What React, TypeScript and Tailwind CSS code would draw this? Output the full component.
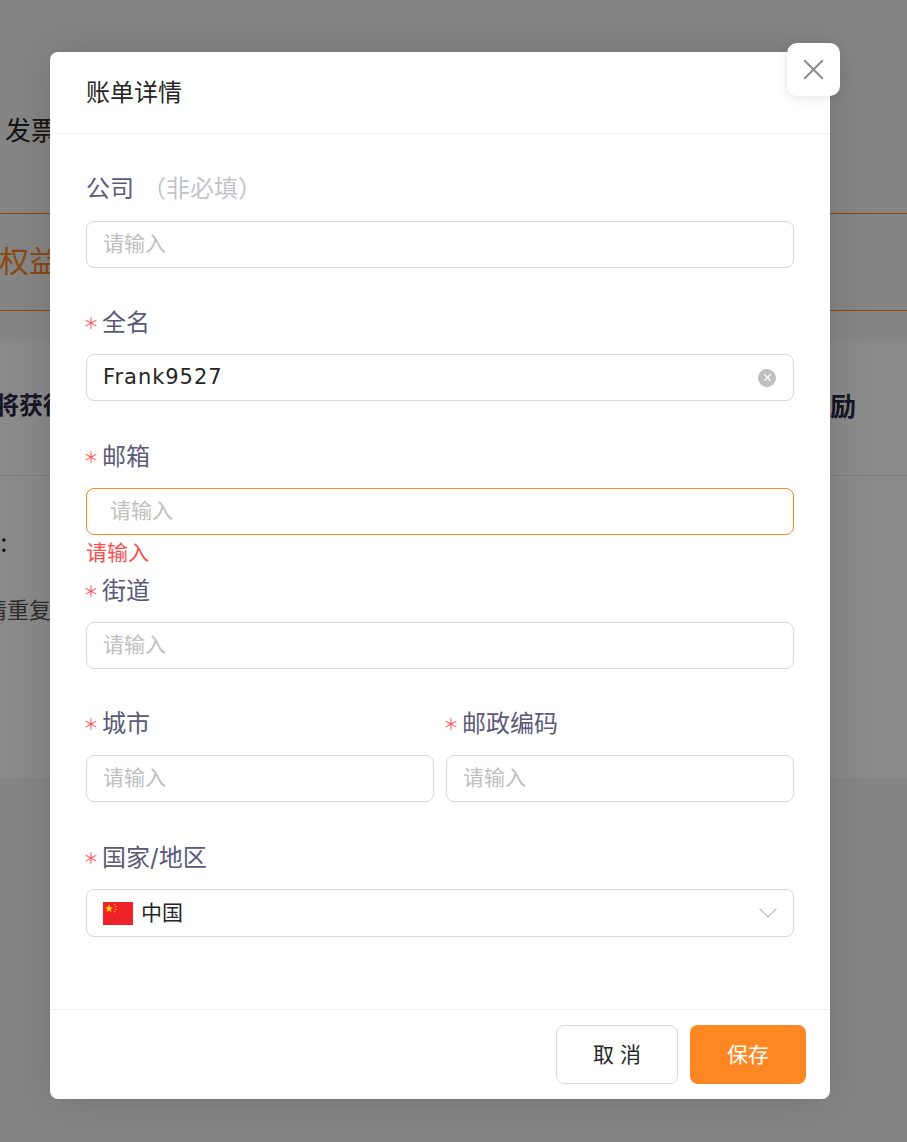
import React from 'react';
import { X, ChevronDown } from 'lucide-react';

const font = "font-['Inter','Noto_Sans_CJK_SC',sans-serif]";

function Label({ text, required, hint }: { text: string; required?: boolean; hint?: string }) {
  return (
    <div className={`flex items-center h-[34px] text-[24px] leading-[34px] text-[#5c5a78] ${required ? 'pt-[1px]' : ''}`}>
      {required && <span className="w-[19px] -ml-[3px] text-[16px] text-[#ff5a5f]">＊</span>}
      <span>{text}</span>
      {hint && <span className="ml-[8px] text-[#c3c3cf]">{hint}</span>}
    </div>
  );
}

function Input({ value, active }: { value?: string; active?: boolean }) {
  return (
    <div
      className={`flex items-center h-[47px] rounded-[8px] border bg-white ${
        active ? 'border-[#fd8823] pl-[23px]' : 'border-[#d9d9d9] pl-[16px]'
      } ${value ? "text-[21px] text-[#262626] tracking-[0.95px] font-['DejaVu_Sans']" : 'text-[21px] text-[#c0c0c0]'}`}
    >
      <span className={value ? 'pt-[1px]' : '-mt-[1px]'}>{value ?? '请输入'}</span>
      {value && (
        <span className="ml-auto mr-[17px] flex items-center justify-center w-[18px] h-[18px] rounded-full bg-[#bfbfbf]">
          <X className="w-[11px] h-[11px] text-white" strokeWidth={3} />
        </span>
      )}
    </div>
  );
}

function CnFlag() {
  return (
    <svg width="30" height="23" viewBox="0 0 30 23" className="shrink-0">
      <rect width="30" height="23" fill="#ee2228" />
      <polygon points="6,2.5 7,5.3 10,5.3 7.6,7.1 8.5,10 6,8.3 3.5,10 4.4,7.1 2,5.3 5,5.3" fill="#ffe000" />
      <circle cx="11.5" cy="2.5" r="0.7" fill="#ffe000" />
      <circle cx="13" cy="4.8" r="0.7" fill="#ffe000" />
      <circle cx="13" cy="7.5" r="0.7" fill="#ffe000" />
      <circle cx="11.5" cy="9.8" r="0.7" fill="#ffe000" />
    </svg>
  );
}

export default function App() {
  return (
    <div className={`relative w-[907px] h-[1142px] overflow-hidden bg-[#f6f6f7] text-[#262626] ${font}`}>
      {/* page behind the dialog */}
      <div className="h-[213px] pt-[113px] pl-[5px] text-[26px] leading-[36px]">发票</div>
      <div className="flex items-center h-[98px] pb-[2px] -ml-[1px] border-y border-[#fd8823] text-[30px] text-[#fd8823]">权益</div>
      <div className="h-[30px]" />
      <div className="bg-white h-[437px]">
        <div className="flex items-center justify-between h-[135px] pb-[4px] border-b border-[#e8e8e8] text-[24px] font-bold text-[#2a2a45] pr-[51px]">
          <span className="-ml-[5px]">将获得</span>
          <span className="text-[26px]">励</span>
        </div>
        <div className="pt-[49px] text-[26px] leading-[36px]">:</div>
        <div className="pt-[32px] -ml-[15px] text-[22px] leading-[34px] text-[#555]">请重复</div>
      </div>

      {/* overlay */}
      <div className="absolute inset-0 bg-black/46" />

      {/* dialog */}
      <div className="absolute left-[50px] top-[52px] w-[780px] h-[1047px] flex flex-col rounded-[8px] bg-white shadow-[0_0_40px_rgba(0,0,0,0.14)]">
        <div className="flex items-center h-[82px] px-[36px] border-b border-[#efefef] text-[24px] text-[#262626]">
          账单详情
        </div>
        <div className="flex-1 px-[36px] pt-[38px]">
          <Label text="公司" hint="（非必填）" />
          <div className="mt-[15px]"><Input /></div>
          <div className="mt-[37px]"><Label text="全名" required /></div>
          <div className="mt-[15px]"><Input value="Frank9527" /></div>
          <div className="mt-[38px]"><Label text="邮箱" required /></div>
          <div className="mt-[15px]"><Input active /></div>
          <div className="h-[35px] mt-[3px] text-[21px] leading-[30px] text-[#ff4d4f]">请输入</div>
          <Label text="街道" required />
          <div className="mt-[15px]"><Input /></div>
          <div className="mt-[37px] grid grid-cols-2 gap-[12px]">
            <div>
              <Label text="城市" required />
              <div className="mt-[15px]"><Input /></div>
            </div>
            <div>
              <Label text="邮政编码" required />
              <div className="mt-[15px]"><Input /></div>
            </div>
          </div>
          <div className="mt-[38px]"><Label text="国家/地区" required /></div>
          <div className="mt-[15px] flex items-center h-[48px] rounded-[8px] border border-[#d9d9d9] pl-[16px] pr-[9px] text-[21px] text-[#262626]">
            <CnFlag />
            <span className="ml-[8px] -mt-[1px]">中国</span>
            <ChevronDown className="ml-auto w-[32px] h-[32px] text-[#c4c4c4]" strokeWidth={1} />
          </div>
        </div>
        <div className="flex items-center justify-end h-[90px] border-t border-[#efefef] pr-[24px] gap-[12px]">
          <button className="w-[122px] h-[59px] rounded-[8px] border border-[#d9d9d9] bg-white text-[21px] text-[#262626]">取 消</button>
          <button className="w-[116px] h-[59px] rounded-[8px] bg-[#fd8823] text-[21px] text-white">保存</button>
        </div>
        <button className="absolute right-[-10px] top-[-9px] flex items-center justify-center w-[53px] h-[53px] rounded-[10px] bg-white shadow-[0_2px_12px_rgba(0,0,0,0.1)]">
          <X className="w-[35px] h-[35px] text-[#8c8c8c]" strokeWidth={1.3} />
        </button>
      </div>
    </div>
  );
}
